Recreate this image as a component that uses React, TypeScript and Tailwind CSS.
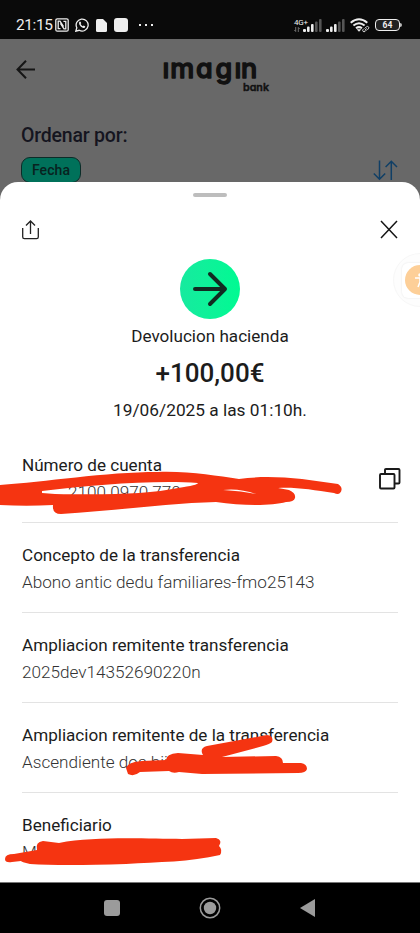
import React from 'react';

interface DetailRowProps {
  title: string;
  value: string;
  action?: React.ReactNode;
  last?: boolean;
}

const DetailRow: React.FC<DetailRowProps> = ({ title, value, action, last }) => (
  <div
    className={
      last
        ? 'flex h-[90px] items-start justify-between'
        : 'flex h-[90px] items-start justify-between border-b border-[#e3e3e3]'
    }
  >
    <div className="pt-[19px]">
      <h3 className="h-[27px] whitespace-nowrap text-[17.1px] leading-[27px] text-[#1c1c1c]">{title}</h3>
      <p className="h-[27px] whitespace-pre text-[17.15px] font-light leading-[27px] text-[#333]">{value}</p>
    </div>
    {action}
  </div>
);

const SignalBars = () => (
  <svg width="19" height="13" viewBox="0 0 19 13">
    <rect x="0" y="10" width="3" height="3" rx="1" fill="#eee" />
    <rect x="4" y="7.5" width="2.6" height="5.5" rx="1" fill="#eee" />
    <rect x="8" y="5" width="2.6" height="8" rx="1" fill="#eee" />
    <rect x="12" y="2.5" width="2.6" height="10.5" rx="1" fill="#555" />
    <rect x="16" y="0" width="2.6" height="13" rx="1" fill="#555" />
  </svg>
);

const StatusBar = () => (
  <header className="flex h-[39px] items-start justify-between bg-[#0a0a0a] pl-4 pr-[18px] pt-[15px] text-[#eee]">
    <div className="flex h-5 items-center">
      <span className="w-[39px] whitespace-nowrap text-[15.5px] leading-5 tracking-[-0.4px]">21:15</span>
      <svg width="14" height="14" viewBox="0 0 14 14" fill="none" stroke="#eee" strokeWidth="1.3">
        <rect x=".8" y=".8" width="12.4" height="12.4" rx="1.5" />
        <path d="M5.5 10.7H3.2V3.2H5L8.6 8.6M8.4 3.3h2.4v7.5H9L5.4 5.3" />
      </svg>
      <svg className="ml-[6px]" width="14" height="14" viewBox="0 0 14 14">
        <path d="M.8 13.2l1-3.4A6 6 0 1 1 4.2 12.3z" fill="none" stroke="#eee" strokeWidth="1.3" />
        <path
          d="M4.2 4.1c.6-.9 1.2-.8 1.5 0l.5 1.1-.6.9c.5 1 1.2 1.7 2.2 2.1l.8-.8 1.5.8c.3.2.1 1.3-.8 1.7C7 10.7 3.2 6.7 4.2 4.1z"
          fill="#eee"
        />
      </svg>
      <svg className="ml-[7px]" width="11" height="13" viewBox="0 0 11 13">
        <path d="M1.5 0H7l4 4v7.5q0 1.5-1.5 1.5h-8Q0 13 0 11.5v-10Q0 0 1.5 0z" fill="#eee" />
      </svg>
      <span className="ml-[7px] h-[14px] w-[14px] rounded-[3px] bg-[#eee]" />
      <span className="ml-[11px] flex gap-[4px]">
        <i className="h-[2px] w-[2px] bg-[#eee]" />
        <i className="h-[2px] w-[2px] bg-[#eee]" />
        <i className="h-[2px] w-[2px] bg-[#eee]" />
      </span>
    </div>
    <div className="flex h-5 items-center">
      <div className="flex items-end">
        <div className="flex w-[9px] flex-col">
          <span className="whitespace-nowrap text-[8px] leading-[8px] tracking-[-0.2px]">4G+</span>
          <svg width="6" height="5" viewBox="0 0 6 5" fill="none" stroke="#999" strokeWidth=".7">
            <path d="M1.7 0v4.5L.3 3M4.3 5V.5L5.7 2" />
          </svg>
        </div>
        <SignalBars />
      </div>
      <span className="ml-[4px]">
        <SignalBars />
      </span>
      <svg className="ml-[5px]" width="20" height="15" viewBox="0 0 20 15" fill="none" stroke="#eee" strokeWidth="2">
        <path d="M.7 4.7Q9 -2.3 17.3 4.7M3.4 7.6Q9 3 14.6 7.6M6 10.3Q9 8 12 10.3" />
        <path d="M6.7 11.3h4.6L9 13.8z" fill="#eee" stroke="none" />
        <path
          d="M14.7 10.5l1.7-1.7q1.2-.8 2 0t0 2l-1 1M16.8 11.7l-1.7 1.7q-1.2.8-2 0t0-2l.7-.7M14.8 12.3l2-2"
          strokeWidth=".9"
        />
      </svg>
      <span className="ml-[5px] flex h-[12px] w-[25px] items-center justify-center rounded-[4px] border-[1.5px] border-[#eee] bg-[#222] text-[8.5px] font-bold leading-none">
        64
      </span>
      <span className="h-[4px] w-[2px] rounded-r bg-[#bbb]" />
    </div>
  </header>
);

const Logo = () => (
  <svg
    className="overflow-visible"
    width="108"
    height="40"
    viewBox="0 0 108 40"
    fill="#111"
    stroke="#111"
    strokeLinejoin="round"
    strokeLinecap="round"
  >
    <text
      x="-.5 7.3 33 52.500 71.500 78"
      y="22.800"
      fontSize="27"
      fontWeight="500"
      strokeWidth="1.400"
      className="font-['Inter','Noto_Sans',sans-serif]"
    >
      ımɑgın
    </text>
    <text
      x="80"
      y="35.500"
      fontSize="10.500"
      fontWeight="600"
      textLength="26"
      lengthAdjust="spacingAndGlyphs"
      strokeWidth=".4"
      className="font-['Inter','Noto_Sans',sans-serif]"
    >
      bɑnk
    </text>
  </svg>
);

const CopyIcon = () => (
  <svg
    className="-mr-[3px] mt-[35px]"
    width="22"
    height="22"
    viewBox="0 0 22 22"
    fill="none"
    stroke="#1a1a1a"
    strokeWidth="1.9"
  >
    <rect x="1" y="6" width="14.5" height="14.5" rx="1" />
    <path d="M6 6V2q0-1 1-1h12.500q1 0 1 1v12.500q0 1-1 1h-4" />
  </svg>
);

const Scribbles = () => (
  <svg
    className="pointer-events-none absolute left-0 top-0"
    width="420"
    height="882"
    viewBox="0 0 420 882"
    fill="#f53411"
  >
    <path
      fillRule="evenodd"
      d="M0 485C45 482 105 472 158 472C190 471 216 476 239 479C260 476 281 477 302 479L338 484Q344 488 340 493Q338 495 334 493C313 490 296 487 278 488L289 490Q296 493 295 498Q294 502 286 502C272 506 242 506 216 502C170 503 112 511 61 514Q52 514 53 505C35 506 18 506 0 505ZM42 493L55 494C110 495 150 494 178 488Q198 485 198 483C153 480 93 485 42 491ZM223 490Q242 491 256 494Q239 488 223 490Z"
    />
    <path d="M126 768Q128 762 142 761L166 760Q166 754 178 753L203 755Q199 748 207 746L267 735Q274 736 272 742Q270 744 263 746L222 757L276 756Q283 757 283 763L301 763Q307 764 307 769Q306 773 298 773L202 774L179 772Q173 774 169 771L140 772Q134 777 128 774Z" />
    <path d="M5 859Q5 854 14 854L37 850Q35 842 43 841L59 843C96 836 148 839 182 839L216 838Q223 840 219 846Q223 850 220 855C190 862 158 862 126 864Q62 866 30 864Q21 862 21 861L12 862Q5 863 5 859Z" />
  </svg>
);

const App: React.FC = () => {
  return (
    <div className="relative flex h-[933px] w-[420px] flex-col overflow-hidden bg-[#686868] font-['Roboto',sans-serif]">
      <StatusBar />

      {/* Dimmed page behind the sheet */}
      <section className="h-[143px] shrink-0">
        <div className="flex h-[75px] items-start pl-4 pt-[16px]">
          <svg className="mt-[5px]" width="20" height="20" viewBox="0 0 20 20" fill="none" stroke="#151515" strokeWidth="2">
            <path d="M10 .8L1.5 9.5l8.5 8.7M1.5 9.5H19" />
          </svg>
          <div className="ml-[127px]">
            <Logo />
          </div>
        </div>
        <h2 className="h-[43px] pl-[21px] pt-[10px] text-[19.500px] font-medium leading-6 tracking-[-0.2px] text-[#15151f]">
          Ordenar por:
        </h2>
        <div className="flex items-start justify-between pl-[21px] pr-[22px]">
          <span className="flex h-[26px] w-[60px] items-center justify-center rounded-[9px] border border-[#0c2c28] bg-[#00715a] pt-px text-[14px] font-medium tracking-[0.1px] text-[#08231f]">
            Fecha
          </span>
          <svg className="mt-[3px]" width="25" height="21" viewBox="0 0 25 21" fill="none" stroke="#103f66" strokeWidth="1.5">
            <path d="M6.5.5v18.500M.8 13.500l5.700 5.700 5.700-5.700M18.300 20V1.500M12.600 7l5.700-5.700L24 7" />
          </svg>
        </div>
      </section>

      {/* Bottom sheet */}
      <main className="h-[700px] shrink-0 rounded-t-[18px] bg-white px-[22px] pt-[11px]">
        <div className="mx-auto h-[4px] w-[34px] rounded-full bg-[#bdbdbd]" />
        <div className="mt-[22px] flex h-[48px] items-start justify-between">
          <svg className="mt-[1px]" width="17" height="20" viewBox="0 0 17 20" fill="none" stroke="#222" strokeWidth="1.3">
            <path d="M.7 8v9q0 1.7 1.7 1.7h12.200q1.700 0 1.700-1.700V8M8.500 14V1.300M4 5.500l4.500-4.500L13 5.500" />
          </svg>
          <svg width="18" height="20" viewBox="0 0 18 20" fill="none" stroke="#151515" strokeWidth="1.5">
            <path d="M1 2l16 17M17 2l-16 17" />
          </svg>
        </div>

        <div className="mt-[-8px] flex flex-col items-center text-[#1c1c1c]">
          <div className="flex h-[60px] w-[60px] items-center justify-center rounded-full bg-linear-to-r from-[#16ea9f] to-[#00fa92]">
            <svg width="36" height="36" viewBox="0 0 36 36" fill="none" stroke="#122b22" strokeWidth="4" strokeLinecap="round" strokeLinejoin="round">
              <path d="M3 18h30M18 3l15 15-15 15" />
            </svg>
          </div>
          <p className="mt-[6px] h-[22px] text-[17.1px] leading-[22px]">Devolucion hacienda</p>
          <p className="mt-[11px] h-[30px] text-[26px] font-medium leading-[30px]">+100,00€</p>
          <p className="mt-[10px] h-[24px] text-[17.3px] leading-[24px]">19/06/2025 a las 01:10h.</p>
        </div>

        <div className="mt-[11px]">
          <DetailRow title="Número de cuenta" value="           2100 0970 770" action={<CopyIcon />} />
          <DetailRow title="Concepto de la transferencia" value="Abono antic dedu familiares-fmo25143" />
          <DetailRow title="Ampliacion remitente transferencia" value="2025dev14352690220n" />
          <DetailRow title="Ampliacion remitente de la transferencia" value="Ascendiente dos hij" />
          <DetailRow title="Beneficiario" value="M" last />
        </div>
      </main>

      <nav className="flex h-[51px] shrink-0 items-center border-t border-[#777] bg-black pl-[104px]">
        <span className="h-4 w-4 rounded-[3px] bg-[#9b9b9b]" />
        <svg className="ml-[79px]" width="22" height="22" viewBox="0 0 22 22">
          <circle cx="11" cy="11" r="9.7" fill="none" stroke="#9b9b9b" strokeWidth="1.5" />
          <circle cx="11" cy="11" r="6.2" fill="#9b9b9b" />
        </svg>
        <svg className="ml-[79px]" width="15" height="18" viewBox="0 0 15 18">
          <path d="M15 0v18L0 9z" fill="#9b9b9b" />
        </svg>
      </nav>

      {/* Accessibility bubble docked to the edge */}
      <div className="absolute left-[393px] top-[253px] flex h-[54px] w-[54px] items-center rounded-full border border-[#f7f7f7] bg-[#fdfdfd] pl-[8px]">
        <div className="flex h-[35px] w-[35px] items-center justify-center rounded-[6px] bg-white shadow-[0_0_2px_#e5e5e5]">
          <svg width="30" height="30" viewBox="0 0 30 30">
            <circle cx="15" cy="15" r="15" fill="#fdcf98" />
            <circle cx="15" cy="10" r="1.8" fill="#fff" />
            <path d="M10 13h10M15 13v4l-2 5M15 17l2 5" stroke="#fff" strokeWidth="1.5" fill="none" />
          </svg>
        </div>
      </div>

      <Scribbles />
    </div>
  );
};

export default App;
